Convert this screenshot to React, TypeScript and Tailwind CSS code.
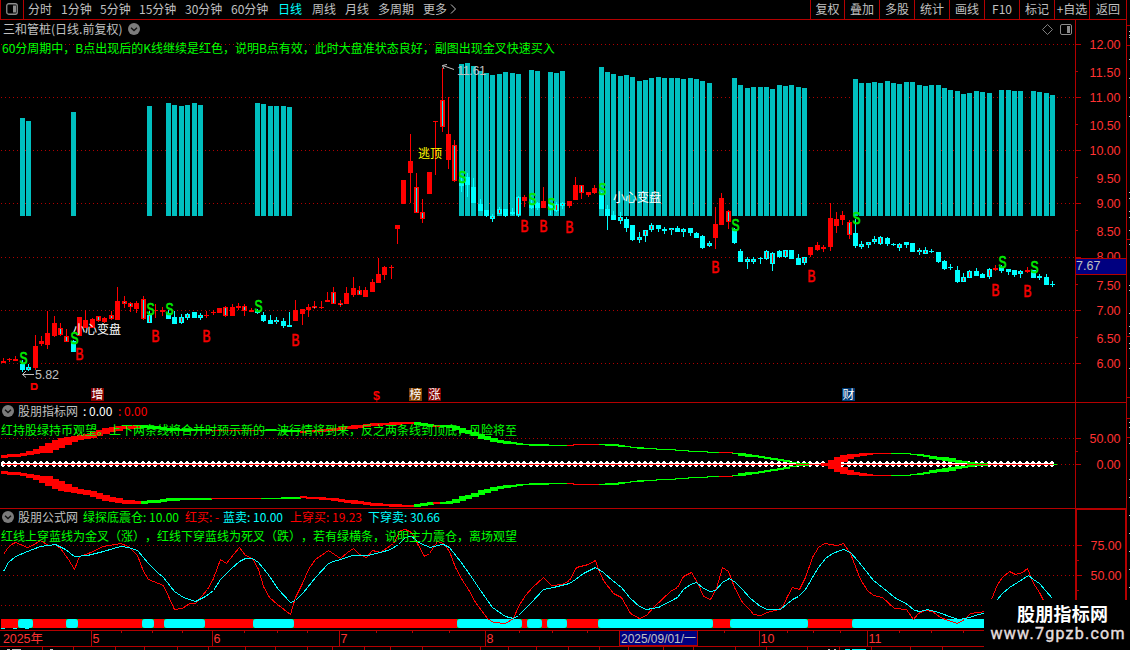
import React from 'react';
import clsx from 'clsx';

const RED = '#ff0000';
const CYAN = '#00ffff';
const LINE = '#b40000';
const CJK = '"Noto Sans CJK SC", sans-serif';
const SANS = '"Liberation Sans", "Noto Sans CJK SC", sans-serif';

// left-to-right pixel centre of a candle
const cx = (i: number) => Math.floor(3.2 + 6.36 * i);

// r: red, x: red with cyan core, c: cyan, y: cyan with red core
type Kind = 'r' | 'x' | 'c' | 'y';
type Candle = [Kind, number, number, number, number];

// kind, high, body top, body bottom, low
const candles: Candle[] = [
  ['r', 358, 361, 363, 363], ['r', 358, 359, 360, 362], ['r', 356, 359, 361, 361], ['c', 360, 364, 370, 372], ['y', 364, 367, 370, 371],
  ['r', 335, 346, 368, 370], ['r', 336, 341, 344, 346], ['r', 311, 333, 345, 349], ['r', 316, 323, 336, 337], ['x', 323, 328, 335, 336],
  ['x', 329, 336, 342, 342], ['c', 340, 341, 352, 352], ['r', 317, 317, 336, 336], ['r', 310, 320, 328, 328], ['r', 318, 319, 328, 328],
  ['x', 316, 316, 321, 322], ['r', 317, 318, 322, 323], ['x', 311, 315, 319, 320], ['r', 287, 301, 320, 320], ['x', 296, 301, 304, 308],
  ['x', 302, 303, 307, 312], ['r', 301, 303, 309, 313], ['x', 296, 299, 319, 320], ['y', 311, 315, 323, 323], ['r', 304, 310, 311, 318],
  ['r', 307, 310, 312, 316], ['c', 310, 313, 319, 319], ['c', 311, 317, 324, 324], ['y', 314, 317, 323, 324], ['y', 313, 314, 318, 320],
  ['c', 312, 312, 318, 318], ['y', 313, 315, 318, 320], ['r', 311, 315, 316, 318], ['r', 310, 312, 313, 315], ['r', 308, 308, 313, 313],
  ['x', 306, 307, 316, 317], ['r', 304, 307, 316, 316], ['r', 303, 306, 308, 310], ['x', 304, 306, 311, 316], ['r', 308, 310, 312, 312],
  ['c', 309, 311, 313, 314], ['c', 312, 315, 321, 322], ['c', 315, 320, 324, 324], ['y', 317, 320, 322, 324], ['c', 318, 321, 326, 328],
  ['c', 312, 325, 327, 327], ['r', 300, 310, 321, 321], ['r', 309, 309, 314, 325], ['r', 304, 307, 310, 317], ['x', 301, 306, 308, 309],
  ['r', 301, 307, 308, 309], ['r', 292, 300, 302, 302], ['x', 287, 292, 304, 304], ['x', 300, 303, 305, 307], ['r', 287, 293, 304, 304],
  ['r', 277, 288, 295, 297], ['x', 286, 290, 295, 295], ['r', 287, 290, 297, 297], ['r', 279, 282, 292, 292], ['r', 258, 274, 283, 283],
  ['r', 266, 267, 275, 280], ['r', 265, 267, 268, 279], ['r', 225, 225, 229, 244], ['r', 180, 180, 204, 204], ['r', 134, 161, 173, 203],
  ['x', 173, 187, 213, 213], ['x', 199, 212, 219, 223], ['r', 172, 172, 194, 194], ['r', 121, 121, 122, 175], ['x', 68, 100, 127, 132],
  ['r', 97, 134, 160, 169], ['x', 140, 145, 181, 182], ['c', 177, 183, 186, 192], ['c', 173, 177, 185, 197], ['c', 178, 187, 203, 203],
  ['c', 199, 204, 211, 211], ['c', 210, 210, 216, 217], ['y', 214, 216, 219, 222], ['y', 207, 209, 214, 214], ['c', 209, 209, 216, 217],
  ['c', 208, 212, 214, 215], ['y', 196, 197, 215, 217], ['r', 195, 197, 201, 207], ['c', 200, 203, 208, 209], ['c', 202, 203, 208, 210],
  ['r', 187, 201, 208, 208], ['c', 203, 204, 209, 215], ['y', 202, 204, 211, 212], ['y', 202, 203, 206, 209], ['r', 201, 201, 206, 208],
  ['r', 177, 185, 200, 200], ['x', 185, 185, 193, 199], ['r', 192, 192, 195, 197], ['r', 185, 188, 193, 194], ['c', 192, 195, 209, 209],
  ['c', 205, 209, 216, 230], ['c', 211, 215, 220, 220], ['y', 212, 217, 221, 224], ['c', 217, 219, 228, 232], ['c', 225, 225, 240, 241],
  ['y', 232, 237, 240, 243], ['y', 230, 230, 236, 242], ['y', 223, 225, 230, 232], ['c', 225, 225, 229, 232], ['c', 227, 229, 231, 234],
  ['y', 228, 228, 230, 235], ['c', 226, 228, 232, 232], ['y', 228, 229, 232, 237], ['c', 228, 228, 233, 236], ['c', 232, 233, 238, 238],
  ['c', 235, 236, 248, 249], ['y', 241, 243, 246, 247], ['r', 207, 224, 238, 249], ['r', 193, 198, 225, 225], ['x', 210, 211, 222, 229],
  ['c', 228, 229, 243, 244], ['c', 249, 251, 262, 262], ['y', 257, 259, 262, 269], ['y', 257, 259, 262, 264], ['c', 257, 258, 259, 264],
  ['y', 250, 251, 259, 260], ['y', 252, 253, 264, 271], ['c', 250, 251, 257, 258], ['y', 250, 250, 257, 258], ['c', 250, 250, 259, 259],
  ['c', 254, 258, 265, 265], ['y', 257, 257, 263, 265], ['r', 247, 247, 255, 257], ['r', 242, 245, 250, 251], ['r', 245, 247, 249, 252],
  ['r', 203, 218, 247, 251], ['r', 212, 219, 226, 233], ['r', 211, 215, 220, 225], ['x', 220, 222, 235, 239], ['c', 219, 233, 246, 248],
  ['y', 241, 244, 247, 249], ['y', 242, 242, 245, 248], ['y', 236, 239, 242, 244], ['y', 236, 237, 244, 245], ['c', 237, 238, 244, 246],
  ['c', 243, 244, 245, 246], ['y', 243, 244, 248, 251], ['c', 242, 242, 245, 248], ['c', 243, 243, 252, 252], ['y', 248, 250, 252, 255],
  ['y', 247, 250, 254, 254], ['c', 249, 251, 252, 253], ['c', 252, 252, 262, 263], ['c', 260, 261, 269, 270], ['c', 264, 267, 268, 270],
  ['c', 266, 270, 282, 283], ['y', 273, 277, 282, 282], ['y', 270, 271, 278, 278], ['c', 268, 271, 276, 276], ['c', 273, 274, 278, 278],
  ['y', 268, 269, 277, 279], ['r', 265, 268, 270, 271], ['c', 265, 267, 271, 273], ['c', 269, 269, 272, 275], ['c', 270, 270, 275, 277],
  ['y', 270, 271, 274, 278], ['r', 267, 270, 272, 273], ['c', 270, 270, 278, 278], ['c', 274, 276, 278, 280], ['c', 274, 277, 285, 285],
  ['c', 281, 284, 285, 287],
];

// first candle index of a run, then the top of each bar
const barRuns: [number, number[]][] = [
  [3, [118, 121]],
  [11, [112]],
  [23, [106]],
  [26, [103, 105, 106, 105, 103, 105]],
  [40, [103, 104, 106, 106, 106, 107]],
  [72, [64, 63, 66, 71, 73, 75, 74, 72, 73, 74]],
  [83, [70, 71]],
  [86, [72, 73, 71]],
  [94, [67, 72, 74, 76, 75, 77, 81, 80, 78, 77, 78, 78, 78, 79, 78, 79, 81, 83]],
  [115, [78, 85, 88, 87, 87, 87, 89, 85, 86, 85, 87, 88]],
  [134, [79, 83, 83, 82, 83, 81, 83, 84, 82, 82, 85, 86, 85, 85, 88, 90, 91, 94, 93, 91, 92, 93]],
  [157, [90, 90, 91, 91]],
  [162, [91, 92, 93, 95]],
];

const sells = [[20, 363], [71, 343], [147, 314], [166, 314], [255, 311], [459, 182], [529, 204], [548, 209], [599, 194], [732, 230], [853, 223], [999, 267], [1031, 272]];
const buys = [[76, 359], [152, 341], [203, 341], [292, 345], [521, 231], [540, 231], [566, 232], [712, 272], [808, 281], [992, 295], [1024, 296]];

// x, upper edge, lower edge of the channel's top band
const channel = [
  [0, 456, 459], [12, 454, 457], [24, 452.5, 456], [34, 450, 454], [42, 446, 453], [48, 443, 453], [56, 440, 450], [64, 437.5, 446],
  [72, 436, 442], [82, 434.5, 439.5], [94, 431.5, 437.5], [104, 428.5, 434.5], [112, 426.5, 431.5], [124, 425.3, 429.5], [136, 425, 428],
  [150, 425.5, 428.5], [165, 427, 430.5], [180, 429, 431], [212, 429.5, 430.5], [238, 429.5, 430.5], [262, 430, 431], [280, 429.5, 431.5],
  [303, 430.5, 432.5], [325, 429, 431.5], [342, 426.5, 430], [355, 425, 428.5], [372, 423.5, 426], [398, 422, 424.7], [413, 421.7, 424],
  [424, 423, 426.5], [434, 425, 427], [442, 425, 427.2], [452, 425.5, 428.8], [462, 428, 432.5], [472, 431, 435.5], [482, 434, 439], [492, 437.5, 441.5],
  [504, 440.8, 443.5], [516, 442.8, 444.8], [530, 444, 445.5], [560, 445, 446], [580, 444.3, 445.3], [600, 444, 445], [615, 444.5, 446], [632, 446.5, 448],
  [655, 448.5, 449.5], [690, 450.5, 451.5], [715, 452, 453], [732, 452.4, 453.4], [742, 453, 456], [756, 455, 457.5], [770, 457.5, 460], [784, 460, 462],
  [800, 463, 464.5], [820, 464, 465], [828, 461.5, 465], [836, 457, 465], [844, 455, 461.5], [852, 454, 458], [862, 453, 455.5], [876, 452.8, 454],
  [905, 453, 454], [918, 454, 455.5], [934, 456, 459], [948, 457.5, 461.5], [960, 460, 463], [974, 462.5, 464], [990, 463.5, 464.5], [1058, 464, 465],
];
const channelGreen = [[138, 211], [259, 300], [412, 434], [438, 566], [597, 720], [730, 823], [889, 1058]];

const fastLine =
  '3,154 7,148 11,144 15,142 20,144 27,147 32,145 40,140 48,145 55,144 60,148 68,159 74,169 79,156 88,153 103,146 120,143 128,146 137,155 143,171 148,179 163,185 174,209 182,208 189,203 195,203 202,195 207,189 213,178 220,159 226,163 233,154 239,147 245,155 252,158 258,169 263,186 269,197 277,204 290,214 295,197 302,183 308,169 315,159 328,150 340,158 347,152 353,148 359,154 366,157 372,150 380,152 393,143 400,130 405,129 411,132 417,143 424,156 429,153 437,141 443,143 449,151 455,167 462,180 468,189 475,202 487,218 493,222 505,223 513,218 518,206 525,195 532,187 543,177 551,185 562,184 569,180 576,167 588,164 595,160 598,169 603,180 613,193 621,197 630,213 639,218 646,215 653,207 670,191 677,187 683,176 691,172 697,182 703,196 710,199 716,188 722,167 728,171 734,187 742,202 750,210 753,214 760,215 767,212 778,209 782,207 787,196 792,187 799,189 805,177 812,157 818,147 824,143 837,145 843,143 850,153 860,179 867,190 873,195 882,197 894,208 906,209 913,219 918,213 924,210 932,211 940,217 948,220 957,223 964,219 970,213 985,211 991,199 997,184 1002,177 1009,171 1015,174 1022,172 1027,168 1033,183 1039,192 1044,202';
const slowLine =
  '3,171 8,162 15,156 27,151 40,146 55,144 65,149 74,156 87,155 103,151 120,146 128,147 137,150 148,163 157,172 163,177 174,191 183,197 195,201 205,196 213,190 220,179 230,169 239,161 245,158 252,158 258,162 267,173 278,189 290,202 295,200 303,192 315,177 328,163 333,161 340,159 352,155 367,155 380,152 390,149 398,144 405,137 411,136 420,143 430,147 437,145 443,144 449,147 460,161 470,175 480,190 492,207 505,216 513,218 518,215 530,203 543,189 553,187 569,183 575,179 583,173 595,167 603,172 612,180 621,187 630,198 639,206 646,209 658,207 677,197 683,189 690,184 696,182 703,188 710,191 715,190 722,182 729,178 735,182 742,189 750,198 760,206 767,209 780,209 792,199 798,196 805,189 812,177 818,167 825,158 832,153 843,149 850,152 858,161 873,180 887,191 894,197 907,204 914,210 920,211 927,209 938,212 952,217 958,219 965,218 972,216 985,212 997,199 1002,193 1009,187 1017,182 1028,175 1033,179 1039,183 1045,190 1052,198';

const cyanBand = [[18, 33], [66, 78], [142, 154], [164, 205], [253, 294], [457, 522], [527, 542], [547, 567], [598, 713], [730, 808], [852, 1000]];

const months: [number, string][] = [[91, '5'], [212, '6'], [339, '7'], [485, '8'], [759, '10'], [867, '11']];
const weekTicks = [121, 152, 182, 244, 277, 307, 376, 412, 449, 519, 552, 587, 724, 787, 813, 840, 899, 931, 963];
const footTicks = [42, 73, 115, 144, 177, 208, 245, 275, 307, 332, 364, 390, 422, 480, 508, 536, 568, 599, 628, 663, 693, 735, 766, 807, 839, 871, 910, 942];

const periods = ['分时', '1分钟', '5分钟', '15分钟', '30分钟', '60分钟', '日线', '周线', '月线', '多周期', '更多'];
const periodWidths = ['w-[33px]', 'w-[39px]', 'w-[39px]', 'w-[46px]', 'w-[46px]', 'w-[47px]', 'w-[34px]', 'w-[33px]', 'w-[33px]', 'w-[45px]', 'w-[27px]'];
const tools = ['复权', '叠加', '多股', '统计', '画线', 'F10', '标记', '+自选', '返回'];

const PanelIcon = () => (
  <svg width="12" height="12" viewBox="0 0 12 12">
    <rect x="0.75" y="0.75" width="10.5" height="10.5" rx="2" fill="none" stroke="#8c8c8c" strokeWidth="1.3" />
    <rect x="7" y="2.5" width="3" height="7" fill="#8c8c8c" />
  </svg>
);

const Chevron = () => (
  <svg width="12" height="12" viewBox="0 0 12 12" className="shrink-0">
    <circle cx="6" cy="6" r="6" fill="#7c7c7c" />
    <path d="M3 4.7 L6 7.5 L9 4.7" fill="none" stroke="#111" strokeWidth="1.3" />
  </svg>
);

const Grid = ({ ys }: { ys: number[] }) => (
  <g stroke="#b00000" strokeDasharray="1 3" shapeRendering="crispEdges">
    {ys.map(y => <line key={y} x1="1" x2="1075" y1={y + 0.5} y2={y + 0.5} />)}
  </g>
);

const Marker = ({ x, y, ch }: { x: number; y: number; ch: 'S' | 'B' }) => (
  <text
    x={x} y={y + 0.5} fontSize="16.5" textLength="8" lengthAdjust="spacingAndGlyphs"
    fill={ch === 'S' ? '#00ff00' : '#ff0000'} stroke={ch === 'S' ? '#00e000' : '#f00000'} strokeWidth="0.7"
    fontFamily={SANS}
  >
    {ch}
  </text>
);

const CandleShape = ({ i, c }: { i: number; c: Candle }) => {
  const [kind, high, top, bottom, low] = c;
  const x = cx(i);
  const color = kind === 'r' || kind === 'x' ? RED : CYAN;
  return (
    <g>
      <rect x={x} y={high} width="1" height={Math.max(1, low - high)} fill={color} />
      <rect x={x - 2} y={top} width="5" height={Math.max(1, bottom - top)} fill={color} />
      {(kind === 'x' || kind === 'y') && (
        <rect x={x} y={top + 1} width="1" height={Math.max(1, bottom - top - 2)} fill={kind === 'x' ? CYAN : RED} />
      )}
    </g>
  );
};

const Badge = ({ x, ch, fill }: { x: number; ch: string; fill: string }) => (
  <g>
    <rect x={x} y="388" width="13" height="13" fill={fill} />
    <text x={x + 0.5} y="399" fontSize="12" fill="#fff" fontFamily={CJK}>{ch}</text>
  </g>
);

const PriceChart = () => (
  <svg className="absolute inset-0" width="1075" height="382" viewBox="0 20 1075 382">
    <Grid ys={[44, 97, 150, 203, 257, 310, 363]} />
    <g shapeRendering="crispEdges">
      {barRuns.map(([start, tops]) => tops.map((t, k) => (
        <rect key={start + k} x={cx(start + k) - 2} y={t} width="5" height={216 - t} fill="#00bfbf" />
      )))}
      {candles.map((c, i) => <CandleShape key={i} i={i} c={c} />)}
    </g>
    <g fontSize="12" fontFamily={CJK}>
      <text x="73" y="334" fill="#fff">小心变盘</text>
      <text x="613" y="202" fill="#fff">小心变盘</text>
      <text x="418" y="158" fill="#ffff00">逃顶</text>
    </g>
    {sells.map(([x, y]) => <Marker key={x} x={x - 0.5} y={y} ch="S" />)}
    {buys.map(([x, y]) => <Marker key={x} x={x - 0.5} y={y} ch="B" />)}
    {/* only the lower half of this one stays visible */}
    <svg x="30" y="383" width="10" height="7" viewBox="0 0 10 7">
      <text x="0" y="6.5" fontSize="16.5" fill={RED} stroke={RED} strokeWidth="0.7" fontFamily={SANS} textLength="8" lengthAdjust="spacingAndGlyphs">B</text>
    </svg>
    <g fontSize="12.5" fontFamily={SANS} fill="#c0c0c0">
      <text x="457" y="75" textLength="29">11.61</text>
      <text x="35" y="379" textLength="24">5.82</text>
      <text x="373" y="400" fill={RED} fontWeight="bold">$</text>
    </g>
    <g stroke="#c0c0c0" fill="none">
      <path d="M454 69.5 L442.5 65.5 L447 64.5 M442.5 65.5 L444 69" />
      <path d="M34 374.5 H22.5 L26 371 M22.5 374.5 L26 377.5" />
    </g>
    <Badge x={91} ch="增" fill="#800000" />
    <Badge x={409} ch="榜" fill="#804000" />
    <Badge x={428} ch="涨" fill="#800000" />
    <Badge x={842} ch="财" fill="#003a75" />
    <path d="M1047.5 24.5 L1052.5 29.5 L1047.5 34.5 L1042.5 29.5 Z" fill="none" stroke="#8c8c8c" strokeWidth="0.9" />
    <rect x="1060.5" y="24.5" width="11" height="10" rx="1.5" fill="none" stroke="#8c8c8c" />
    <rect x="1067" y="26" width="3" height="7" fill="#8c8c8c" />
  </svg>
);

const sample = (x: number, k: number) => {
  const n = channel.findIndex(p => p[0] > x);
  if (n < 1) return channel[channel.length - 1][k];
  const a = channel[n - 1];
  const b = channel[n];
  return a[k] + ((b[k] - a[k]) * (x - a[0])) / (b[0] - a[0]);
};

const ChannelChart = () => {
  const steps = candles.map((_, i) => {
    const x = Math.max(1, cx(i) - 2);
    const top = Math.round(sample(x + 3, 1));
    const h = Math.max(1, Math.round(sample(x + 3, 2)) - top);
    const green = channelGreen.some(([a, b]) => x + 3 >= a && x + 3 < b);
    return { x, top, h, w: cx(i + 1) - cx(i) + 1, fill: green ? '#00ff00' : RED };
  });
  return (
    <svg className="absolute inset-0" width="1075" height="105" viewBox="0 403 1075 105" shapeRendering="crispEdges">
      <Grid ys={[438, 464]} />
      <rect x="1" y="463" width="1053" height="1" fill="#fff" />
      {candles.map((_, i) => (
        <g key={i} fill="#fff">
          <rect x={cx(i) - 1} y="461" width="2" height="6" />
          <rect x={cx(i) - 2} y="462" width="4" height="4" />
        </g>
      ))}
      {steps.map(s => (
        <g key={s.x} fill={s.fill}>
          <rect x={s.x} y={s.top} width={s.w} height={s.h} />
          <rect x={s.x} y={929 - s.top - s.h} width={s.w} height={s.h} />
        </g>
      ))}
      <rect x="3" y="464" width="1050" height="1" fill={RED} />
    </svg>
  );
};

const OscillatorChart = () => (
  <svg className="absolute inset-0" width="1075" height="121" viewBox="0 509 1075 121">
    <Grid ys={[545, 575, 605]} />
    <rect x="1" y="619" width="990" height="9" fill={RED} />
    {cyanBand.map(([a, b]) => (
      <g key={a}>
        <path d={`M${a} 619.5 h3 M${a} 627.5 h3 M${b - 3} 619.5 h3 M${b - 3} 627.5 h3`} stroke="#00c000" />
        <rect x={a} y="619" width={b - a} height="9" rx="3" fill={CYAN} />
      </g>
    ))}
    <path d="M1 628.5 h36" stroke={CYAN} strokeDasharray="4 8" />
    <g fill="none" transform="translate(0.5 400.5)" shapeRendering="crispEdges">
      <polyline points={fastLine} stroke={RED} />
      <polyline points={slowLine} stroke={CYAN} />
    </g>
  </svg>
);

interface AxisProps {
  top: number;
  height: number;
  labels: [number, string][];
  major: number[];
  minor: number[];
}

const Axis = ({ top, height, labels, major, minor }: AxisProps) => (
  <svg width="50" height={height} viewBox={`1076 ${top} 50 ${height}`} className="block">
    {major.map(y => <rect key={y} x="1076" y={y} width="5" height="1" fill={LINE} />)}
    {minor.map(y => <rect key={y} x="1076" y={y} width="2" height="1" fill={LINE} />)}
    <g fill="#ff3232" fontSize="12.5" fontFamily={SANS}>
      {labels.map(([y, t]) => (
        <text key={t} x="1120.5" y={y + 4} textAnchor="end" textLength={t.length === 5 ? 31 : 24}>{t}</text>
      ))}
    </g>
  </svg>
);

const Toolbar = () => (
  <div className="flex h-[20px] shrink-0 items-stretch border-b border-[#b40000] text-[#c0c0c0]">
    <div className="flex w-[24px] items-center justify-center border-x border-[#b40000] pr-px pb-0.5">
      <PanelIcon />
    </div>
    <div className="flex flex-1 items-center pb-px pl-[4px]">
      {periods.map((p, i) => (
        <span key={p} className={clsx(periodWidths[i], p === '日线' && 'text-[#00ffff]')}>{p}</span>
      ))}
      <svg width="7" height="10" viewBox="0 0 7 10">
        <path d="M1 0.5 L5.5 5 L1 9.5" fill="none" stroke="#c0c0c0" />
      </svg>
    </div>
    <div className="flex">
      {tools.map((t, i) => (
        <span
          key={t}
          className={clsx('flex items-center justify-center border-l border-[#b40000] pb-px', i === 0 ? 'w-[34px]' : i === 8 ? 'w-[37px]' : 'w-[35px]')}
        >
          {t}
        </span>
      ))}
    </div>
  </div>
);

const Timeline = () => (
  <svg width="1126" height="20" viewBox="0 630 1126 20" className="block shrink-0" shapeRendering="crispEdges">
    <rect x="0" y="630" width="1126" height="1" fill={LINE} />
    <rect x="0" y="646" width="1126" height="1" fill={LINE} />
    {weekTicks.map(x => <rect key={x} x={x} y="631" width="1" height="2" fill={LINE} />)}
    {footTicks.map(x => <rect key={x} x={x} y="647" width="1" height="3" fill={LINE} />)}
    {months.map(([x]) => <rect key={x} x={x} y="631" width="1" height="15" fill={LINE} />)}
    <rect x="619.5" y="630.5" width="78" height="15" fill="#000080" stroke={LINE} />
    <g fontSize="12.5" fill="#ff3232" fontFamily={SANS}>
      <text x="3" y="643" textLength="40">2025年</text>
      {months.map(([x, m]) => <text key={x} x={x + 1.5} y="643">{m}</text>)}
      <text x="621" y="642.5" fill="#c0c0c0" textLength="75" lengthAdjust="spacingAndGlyphs">2025/09/01/一</text>
    </g>
    <g fill="#c0c0c0">
      <rect x="7" y="649" width="3" height="1" />
      <rect x="12" y="649" width="9" height="1" />
      <rect x="50" y="649" width="3" height="1" />
      <rect x="828" y="649" width="2" height="1" />
      <rect x="834" y="649" width="2" height="1" />
      <rect x="845" y="649" width="5" height="1" fill={CYAN} />
      <rect x="852" y="649" width="14" height="1" fill={CYAN} />
    </g>
  </svg>
);

const EdgeStrip = () => (
  <svg width="3" height="650" viewBox="1127 0 3 650" className="block" shapeRendering="crispEdges">
    {[25, 45, 239, 336, 397, 418, 437].map(y => <rect key={y} x="1127" y={y} width="3" height="1" fill={LINE} />)}
    {[31, 35, 37, 59, 78, 97, 116, 192, 198, 211, 217, 230, 244, 285, 290, 313, 326, 333, 343, 348, 368, 422, 427, 443, 479, 497, 515, 533, 551, 569, 587].map(y => (
      <rect key={y} x="1129" y={y} width="1" height="1" fill="#c0c0c0" />
    ))}
  </svg>
);

const App = () => {
  return (
    <div className="relative flex h-[650px] w-[1130px] overflow-hidden bg-black font-['Noto_Sans_CJK_SC',sans-serif] text-[12px] leading-[18px] whitespace-nowrap [text-spacing-trim:space-all]">
      <div className="flex w-[1126px] shrink-0 flex-col">
        <Toolbar />

        {/* Candles */}
        <div className="flex h-[383px] shrink-0 border-b border-[#b40000]">
          <div className="relative w-[1075px] shrink-0">
            <PriceChart />
            <div className="relative flex items-center gap-[5px] pl-[3px] text-[#c0c0c0]">
              <span className="w-[120px]">三和管桩(日线.前复权)</span>
              <Chevron />
            </div>
            <p className="relative mt-px pl-[2px] text-[#00ff00]">60分周期中，B点出现后的K线继续是红色，说明B点有效，此时大盘准状态良好，副图出现金叉快速买入</p>
          </div>
          <div className="relative w-[51px] border-l border-[#b40000]">
            <Axis
              top={20}
              height={382}
              major={[44, 97, 150, 203, 257, 310, 363]}
              minor={[71, 124, 177, 230, 284, 337]}
              labels={[[45, '12.00'], [73, '11.50'], [98, '11.00'], [126, '10.50'], [151, '10.00'], [179, '9.50'], [204, '9.00'], [232, '8.50'], [257, '8.00'], [286, '7.50'], [311, '7.00'], [339, '6.50'], [364, '6.00']]}
            />
            <div className="absolute top-[238px] left-0 h-[17px] w-[50px] border-y border-[#b40000] bg-[#000080] font-['Liberation_Sans',sans-serif] text-[12.5px] leading-[15px] text-[#c0c0c0]">7.67</div>
          </div>
        </div>

        {/* Channel */}
        <div className="flex h-[106px] shrink-0 border-b border-[#b40000]">
          <div className="relative w-[1075px] shrink-0">
            <ChannelChart />
            <div className="relative -mt-px flex items-center pl-[2px] text-[#c0c0c0]">
              <Chevron />
              <span className="ml-[4px] w-[65px]">股朋指标网</span>
              <span className="w-[35px] text-white">: 0.00</span>
              <span className="text-[#ff0000]">: 0.00</span>
            </div>
            <p className="relative mt-px pl-[1px] text-[#00ff00]">红持股绿持币观望。上下两条线将合并时预示新的一波行情将到来，反之两条线到顶底，风险将至</p>
          </div>
          <div className="w-[51px] border-l border-[#b40000]">
            <Axis top={403} height={105} major={[438, 464]} minor={[451]} labels={[[439, '50.00'], [465, '0.00']]} />
          </div>
        </div>

        {/* Oscillator */}
        <div className="flex h-[121px] shrink-0">
          <div className="relative w-[1075px] shrink-0">
            <OscillatorChart />
            <div className="relative -mt-px flex items-center pl-[2px] text-[#c0c0c0]">
              <Chevron />
              <span className="ml-[4px] w-[65px]">股朋公式网</span>
              <span className="w-[102px] text-[#00ff00]">绿探底震仓: 10.00</span>
              <span className="w-[38px] text-[#ff0000]">红买: -</span>
              <span className="w-[67px] text-[#00ffff]">蓝卖: 10.00</span>
              <span className="w-[78px] text-[#ff0000]">上穿买: 19.23</span>
              <span className="text-[#00ffff]">下穿卖: 30.66</span>
            </div>
            <p className="relative mt-px pl-[1px] text-[#00ff00]">红线上穿蓝线为金叉（涨），红线下穿蓝线为死叉（跌），若有绿横条，说明主力震仓，离场观望</p>
          </div>
          <div className="w-[51px] overflow-hidden border-t border-r border-l-2 border-[#b40000]">
            <Axis top={510} height={120} major={[545, 575, 605]} minor={[560, 590, 620]} labels={[[546, '75.00'], [576, '50.00']]} />
          </div>
        </div>

        <Timeline />
      </div>
      <div className="w-[4px] border-l border-[#b40000]">
        <EdgeStrip />
      </div>

      {/* Site mark over the corner */}
      <div className="absolute right-0 bottom-0 flex h-[50px] w-[146px] flex-col items-center bg-black">
        <svg width="146" height="50" viewBox="984 600 146 50">
          <text x="1017" y="621" fontSize="18" fontWeight="bold" fill="#fff" fontFamily={CJK} textLength="91">股朋指标网</text>
          <text x="990.5" y="639" fontSize="16" fill="#e4dede" stroke="#e4dede" strokeWidth="0.4" fontFamily='Roboto, "DejaVu Sans", sans-serif' textLength="134">www.7gpzb.com</text>
        </svg>
      </div>
    </div>
  );
};

export default App;
